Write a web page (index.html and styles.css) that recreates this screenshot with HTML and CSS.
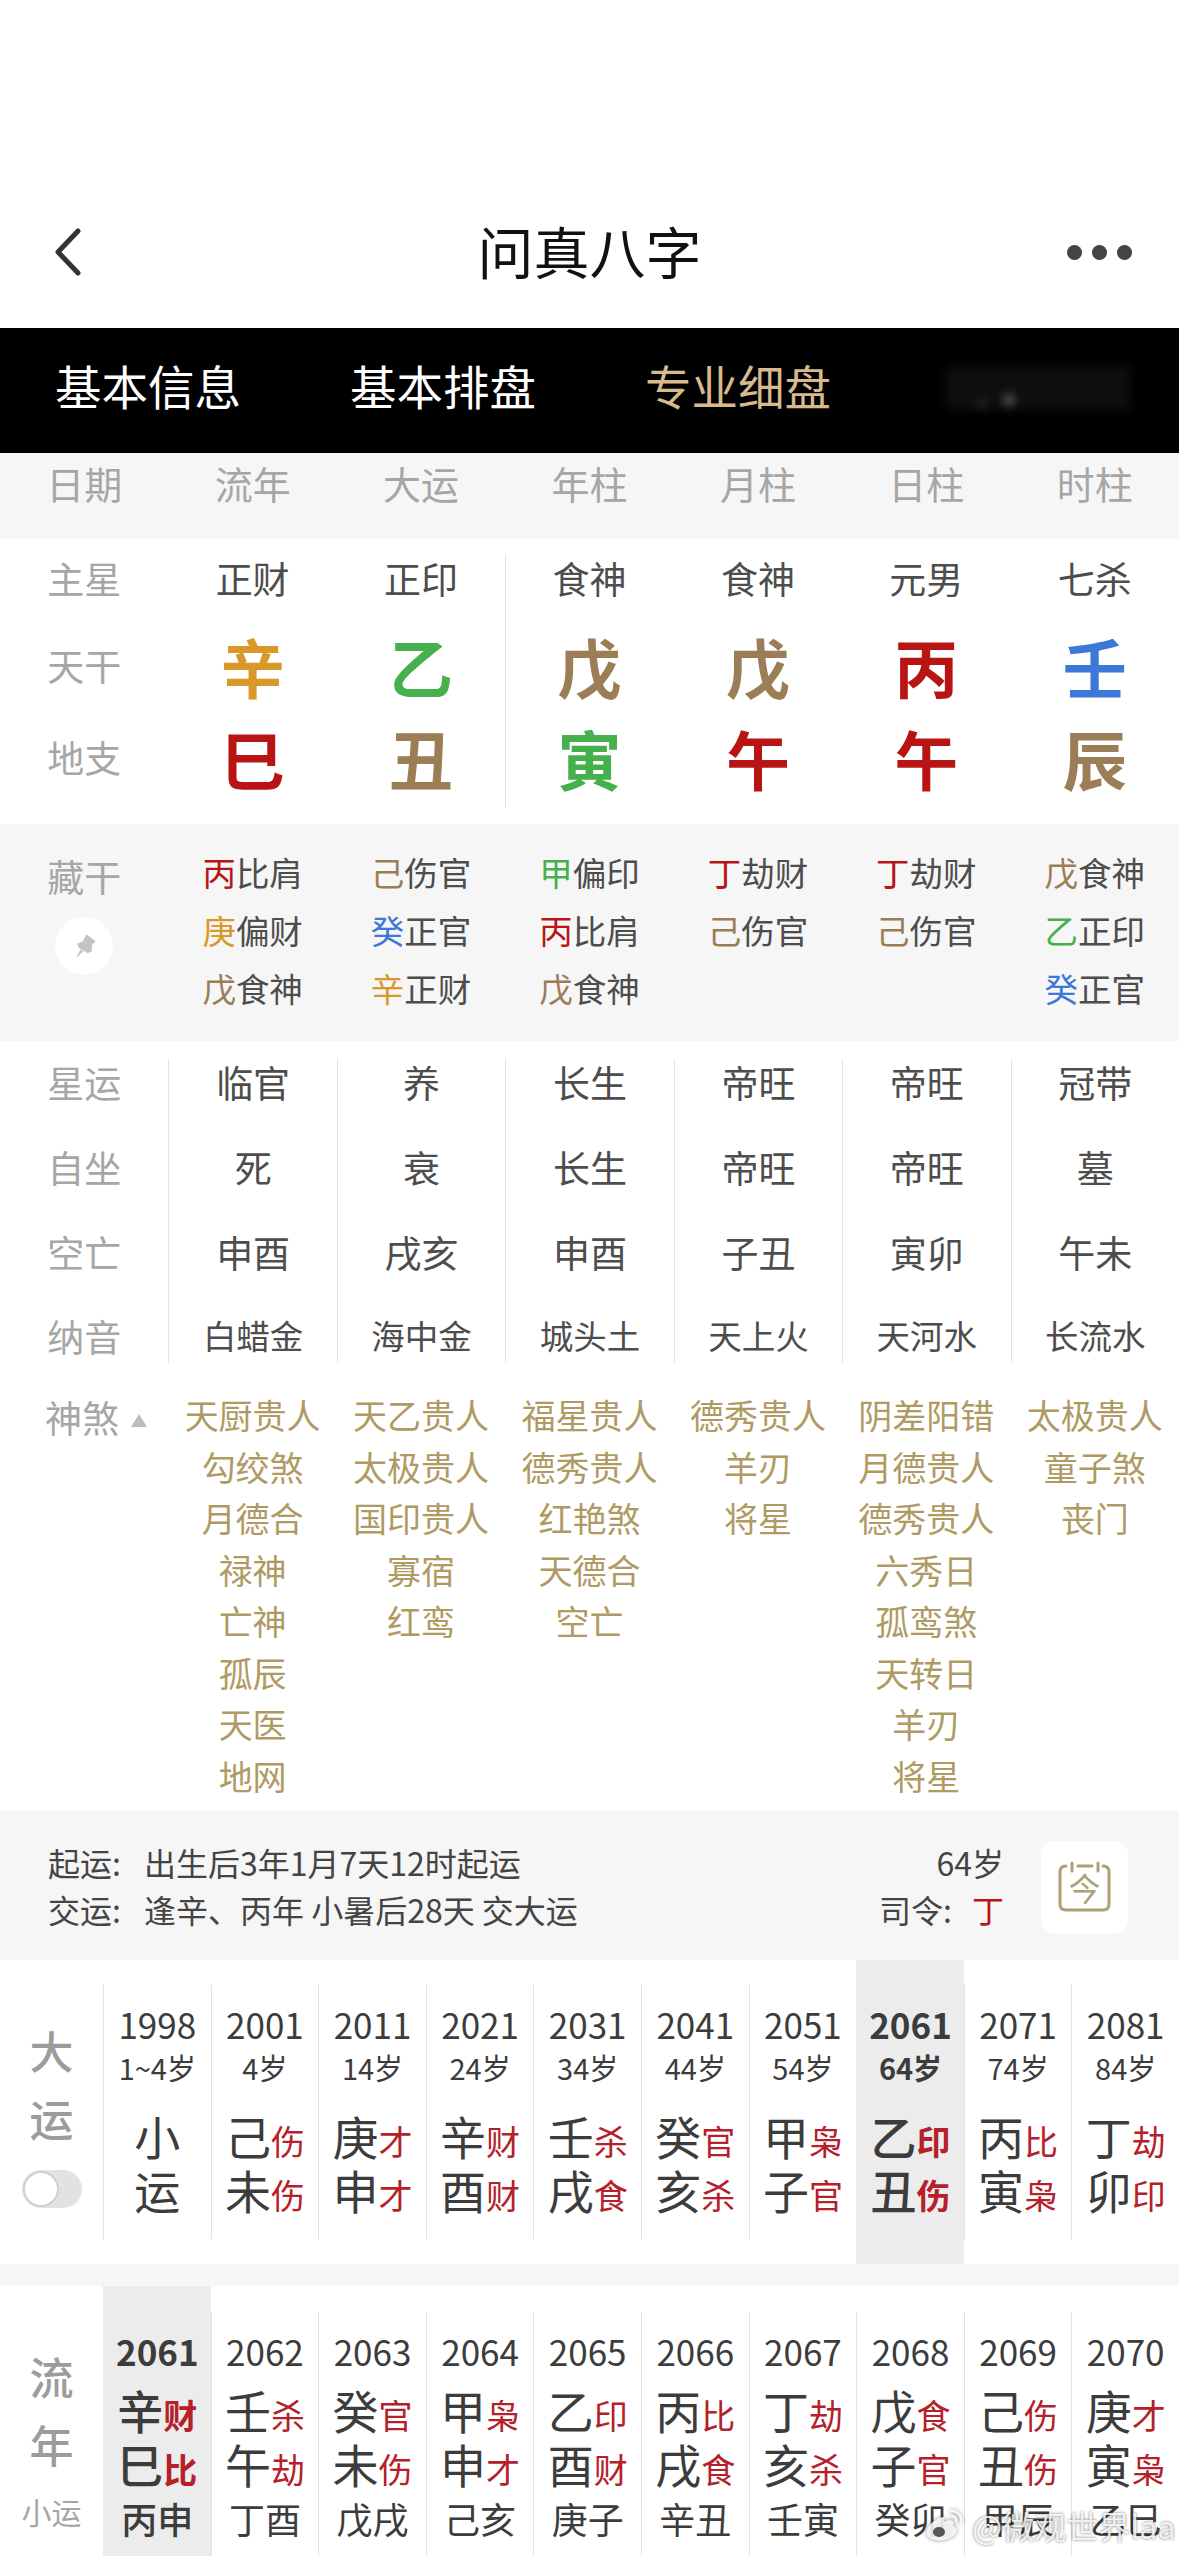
FILE: index.html
```html
<!DOCTYPE html>
<html lang="zh-CN">

<head>
    <meta charset="UTF-8">
    <meta name="viewport" content="width=device-width, initial-scale=1.0">
    <title>问真八字</title>
    <link rel="stylesheet" href="styles.css">
</head>

<body>
    <header class="topbar">
        <div class="topbar-side">
            <svg class="icon-back" viewBox="0 0 30 50"><path d="M25 4 L5 25 L25 46"/></svg>
        </div>
        <div class="topbar-title">问真八字</div>
        <div class="topbar-side topbar-more"><i></i><i></i><i></i></div>
    </header>

    <nav class="tabs">
        <div class="tab">基本信息</div>
        <div class="tab">基本排盘</div>
        <div class="tab tab-active">专业细盘</div>
        <div class="tab-blur"></div>
    </nav>

    <div class="grid7 headrow">
        <div>日期</div><div>流年</div><div>大运</div><div>年柱</div><div>月柱</div><div>日柱</div><div>时柱</div>
    </div>

    <!-- 主星 天干 地支 -->
    <section class="grid7 pillars">
        <div class="label">主星</div><div class="star">正财</div><div class="star">正印</div><div class="star">食神</div><div class="star">食神</div><div class="star">元男</div><div class="star">七杀</div>
        <div class="label">天干</div><div class="big gold">辛</div><div class="big green">乙</div><div class="big brown">戊</div><div class="big brown">戊</div><div class="big red">丙</div><div class="big blue">壬</div>
        <div class="label">地支</div><div class="big red">巳</div><div class="big brown">丑</div><div class="big green">寅</div><div class="big red">午</div><div class="big red">午</div><div class="big brown">辰</div>
    </section>

    <!-- 藏干 -->
    <section class="grid7 hidden-band">
        <div class="hidden-label">
            <div class="label">藏干</div>
            <div class="pin">
                <svg viewBox="0 0 24 24"><path d="M14 2 L22 8 L19 11 L18.5 17 L15 18 L8 14 L6 10 L11 8 Z M9 15 L11.5 16.5 L5 22.5 Z"/></svg>
            </div>
        </div>
        <div class="hidden-col">
            <p><b class="red">丙</b>比肩</p><p><b class="gold">庚</b>偏财</p><p><b class="brown">戊</b>食神</p>
        </div>
        <div class="hidden-col">
            <p><b class="brown">己</b>伤官</p><p><b class="blue">癸</b>正官</p><p><b class="gold">辛</b>正财</p>
        </div>
        <div class="hidden-col">
            <p><b class="green">甲</b>偏印</p><p><b class="red">丙</b>比肩</p><p><b class="brown">戊</b>食神</p>
        </div>
        <div class="hidden-col">
            <p><b class="red">丁</b>劫财</p><p><b class="brown">己</b>伤官</p>
        </div>
        <div class="hidden-col">
            <p><b class="red">丁</b>劫财</p><p><b class="brown">己</b>伤官</p>
        </div>
        <div class="hidden-col">
            <p><b class="brown">戊</b>食神</p><p><b class="green">乙</b>正印</p><p><b class="blue">癸</b>正官</p>
        </div>
    </section>

    <!-- 星运 自坐 空亡 纳音 -->
    <section class="grid7 fortune">
        <div class="fortune-col fortune-labels">
            <div>星运</div><div>自坐</div><div>空亡</div><div>纳音</div>
        </div>
        <div class="fortune-col"><div>临官</div><div>死</div><div>申酉</div><div class="nayin">白蜡金</div></div>
        <div class="fortune-col"><div>养</div><div>衰</div><div>戌亥</div><div class="nayin">海中金</div></div>
        <div class="fortune-col"><div>长生</div><div>长生</div><div>申酉</div><div class="nayin">城头土</div></div>
        <div class="fortune-col"><div>帝旺</div><div>帝旺</div><div>子丑</div><div class="nayin">天上火</div></div>
        <div class="fortune-col"><div>帝旺</div><div>帝旺</div><div>寅卯</div><div class="nayin">天河水</div></div>
        <div class="fortune-col"><div>冠带</div><div>墓</div><div>午未</div><div class="nayin">长流水</div></div>
    </section>

    <!-- 神煞 -->
    <section class="grid7 gods">
        <div class="gods-label">神煞<i class="caret"></i></div>
        <div class="gods-col"><div>天厨贵人</div><div>勾绞煞</div><div>月德合</div><div>禄神</div><div>亡神</div><div>孤辰</div><div>天医</div><div>地网</div></div>
        <div class="gods-col"><div>天乙贵人</div><div>太极贵人</div><div>国印贵人</div><div>寡宿</div><div>红鸾</div></div>
        <div class="gods-col"><div>福星贵人</div><div>德秀贵人</div><div>红艳煞</div><div>天德合</div><div>空亡</div></div>
        <div class="gods-col"><div>德秀贵人</div><div>羊刃</div><div>将星</div></div>
        <div class="gods-col"><div>阴差阳错</div><div>月德贵人</div><div>德秀贵人</div><div>六秀日</div><div>孤鸾煞</div><div>天转日</div><div>羊刃</div><div>将星</div></div>
        <div class="gods-col"><div>太极贵人</div><div>童子煞</div><div>丧门</div></div>
    </section>

    <!-- 起运 交运 -->
    <section class="info">
        <div class="info-left">
            <div class="info-line"><span class="info-key">起运:</span>出生后3年1月7天12时起运</div>
            <div class="info-line"><span class="info-key">交运:</span>逢辛、丙年 小暑后28天 交大运</div>
        </div>
        <div class="info-right">
            <div class="info-line">64岁</div>
            <div class="info-line">司令:<span class="info-ding red">丁</span></div>
        </div>
        <div class="today">
            <svg viewBox="0 0 53 49">
                <path d="M8 3 Q2 3 2 9 L2 41 Q2 47 8 47 L45 47 Q51 47 51 41 L51 9 Q51 3 45 3"/>
                <path d="M14 0 L14 8 M40 0 L40 8 M20 3 L34 3"/>
                <text x="26.5" y="38">今</text>
            </svg>
        </div>
    </section>

    <!-- 大运 -->
    <section class="luck luck-big">
        <div class="luck-side">
            <div class="side-char">大</div>
            <div class="side-char">运</div>
            <div class="toggle"><i></i></div>
        </div>
        <div class="luck-col"><div class="luck-inner">
            <div class="year">1998</div><div class="age">1~4岁</div>
            <div class="gz gz-first">小</div><div class="gz">运</div>
        </div></div>
        <div class="luck-col"><div class="luck-inner">
            <div class="year">2001</div><div class="age">4岁</div>
            <div class="gz gz-first">己<small>伤</small></div><div class="gz">未<small>伤</small></div>
        </div></div>
        <div class="luck-col"><div class="luck-inner">
            <div class="year">2011</div><div class="age">14岁</div>
            <div class="gz gz-first">庚<small>才</small></div><div class="gz">申<small>才</small></div>
        </div></div>
        <div class="luck-col"><div class="luck-inner">
            <div class="year">2021</div><div class="age">24岁</div>
            <div class="gz gz-first">辛<small>财</small></div><div class="gz">酉<small>财</small></div>
        </div></div>
        <div class="luck-col"><div class="luck-inner">
            <div class="year">2031</div><div class="age">34岁</div>
            <div class="gz gz-first">壬<small>杀</small></div><div class="gz">戌<small>食</small></div>
        </div></div>
        <div class="luck-col"><div class="luck-inner">
            <div class="year">2041</div><div class="age">44岁</div>
            <div class="gz gz-first">癸<small>官</small></div><div class="gz">亥<small>杀</small></div>
        </div></div>
        <div class="luck-col"><div class="luck-inner">
            <div class="year">2051</div><div class="age">54岁</div>
            <div class="gz gz-first">甲<small>枭</small></div><div class="gz">子<small>官</small></div>
        </div></div>
        <div class="luck-col luck-now"><div class="luck-inner">
            <div class="year">2061</div><div class="age">64岁</div>
            <div class="gz gz-first">乙<small>印</small></div><div class="gz">丑<small>伤</small></div>
        </div></div>
        <div class="luck-col"><div class="luck-inner">
            <div class="year">2071</div><div class="age">74岁</div>
            <div class="gz gz-first">丙<small>比</small></div><div class="gz">寅<small>枭</small></div>
        </div></div>
        <div class="luck-col"><div class="luck-inner">
            <div class="year">2081</div><div class="age">84岁</div>
            <div class="gz gz-first">丁<small>劫</small></div><div class="gz">卯<small>印</small></div>
        </div></div>
    </section>

    <div class="band-gap"></div>

    <!-- 流年 -->
    <section class="luck luck-year">
        <div class="luck-side">
            <div class="side-char">流</div>
            <div class="side-char">年</div>
            <div class="side-small">小运</div>
        </div>
        <div class="luck-col luck-now"><div class="luck-inner">
            <div class="year">2061</div>
            <div class="gz gz-first">辛<small>财</small></div><div class="gz">巳<small>比</small></div><div class="gz-minor">丙申</div>
        </div></div>
        <div class="luck-col"><div class="luck-inner">
            <div class="year">2062</div>
            <div class="gz gz-first">壬<small>杀</small></div><div class="gz">午<small>劫</small></div><div class="gz-minor">丁酉</div>
        </div></div>
        <div class="luck-col"><div class="luck-inner">
            <div class="year">2063</div>
            <div class="gz gz-first">癸<small>官</small></div><div class="gz">未<small>伤</small></div><div class="gz-minor">戊戌</div>
        </div></div>
        <div class="luck-col"><div class="luck-inner">
            <div class="year">2064</div>
            <div class="gz gz-first">甲<small>枭</small></div><div class="gz">申<small>才</small></div><div class="gz-minor">己亥</div>
        </div></div>
        <div class="luck-col"><div class="luck-inner">
            <div class="year">2065</div>
            <div class="gz gz-first">乙<small>印</small></div><div class="gz">酉<small>财</small></div><div class="gz-minor">庚子</div>
        </div></div>
        <div class="luck-col"><div class="luck-inner">
            <div class="year">2066</div>
            <div class="gz gz-first">丙<small>比</small></div><div class="gz">戌<small>食</small></div><div class="gz-minor">辛丑</div>
        </div></div>
        <div class="luck-col"><div class="luck-inner">
            <div class="year">2067</div>
            <div class="gz gz-first">丁<small>劫</small></div><div class="gz">亥<small>杀</small></div><div class="gz-minor">壬寅</div>
        </div></div>
        <div class="luck-col"><div class="luck-inner">
            <div class="year">2068</div>
            <div class="gz gz-first">戊<small>食</small></div><div class="gz">子<small>官</small></div><div class="gz-minor">癸卯</div>
        </div></div>
        <div class="luck-col"><div class="luck-inner">
            <div class="year">2069</div>
            <div class="gz gz-first">己<small>伤</small></div><div class="gz">丑<small>伤</small></div><div class="gz-minor">甲辰</div>
        </div></div>
        <div class="luck-col"><div class="luck-inner">
            <div class="year">2070</div>
            <div class="gz gz-first">庚<small>才</small></div><div class="gz">寅<small>枭</small></div><div class="gz-minor">乙巳</div>
        </div></div>
    </section>

    <div class="watermark">
        <svg viewBox="0 0 40 34">
            <path d="M16 10 C6 14 1 22 3 27 C6 33 18 34 26 30 C34 26 35 20 29 18 C31 12 26 11 20 14 C21 9 20 8 16 10 Z"/>
            <path class="wm-arc" d="M26 3 C34 2 39 9 37 16 M27 8 C31 8 33 11 32 14"/>
            <ellipse class="wm-eye" cx="15" cy="24" rx="6" ry="5"/>
        </svg>
        <span>@微观世界laa</span>
    </div>
</body>

</html>
```

FILE: styles.css
```css
* {
    box-sizing: border-box;
}

body {
    margin: 0;
    width: 1179px;
    height: 2556px;
    overflow: hidden;
    position: relative;
    background-color: #fff;
    color: #4d4d4d;
    font-family: "Noto Sans CJK SC", "Noto Sans", sans-serif;
}

p {
    margin: 0;
}

.gold { color: #d9982a; }
.green { color: #46b04c; }
.brown { color: #9b7d56; }
.red { color: #b81414; }
.blue { color: #3c78d8; }

.grid7 {
    display: grid;
    grid-template-columns: repeat(7, 1fr);
    text-align: center;
}

/* barra superior */
.topbar {
    height: 328px;
    padding: 170px 47px 0;
    display: flex;
    align-items: center;
}

.topbar-side {
    width: 90px;
    display: flex;
    align-items: center;
    margin-top: 6px;
}

.topbar-title {
    flex: 1;
    text-align: center;
    font-size: 56px;
    color: #111;
}

.icon-back {
    width: 30px;
    height: 50px;
    margin-left: 6px;
    fill: none;
    stroke: #333;
    stroke-width: 5;
    stroke-linecap: round;
    stroke-linejoin: round;
}

.topbar-more {
    justify-content: flex-end;
    gap: 10px;
}

.topbar-more i {
    width: 15px;
    height: 15px;
    border-radius: 50%;
    background-color: #444;
}

/* pestanas */
.tabs {
    height: 125px;
    padding: 0 0 12px 55px;
    background-color: #000;
    display: flex;
    align-items: center;
}

.tab {
    width: 295px;
    font-size: 46.5px;
    color: #fff;
}

.tab-active {
    color: #d6b98c;
}

.tab-blur {
    width: 185px;
    height: 44px;
    margin-top: 6px;
    margin-left: 6px;
    filter: blur(5px);
    background:
        radial-gradient(circle at 36px 38px, #777 0, rgba(120, 120, 120, 0) 4px),
        radial-gradient(circle at 63px 34px, #aaa 0, rgba(120, 120, 120, 0) 7px),
        #0e0e0e;
}

.headrow {
    height: 86px;
    background-color: #f6f6f6;
    font-size: 38px;
    line-height: 60px;
    color: #a6a6a6;
}

.label {
    font-size: 37px;
    color: #a6a6a6;
}

/* pilares */
.pillars {
    height: 253px;
    margin: 16px 0;
    padding-bottom: 17px;
    grid-template-rows: 47px 122px 58px;
    row-gap: 2px;
    align-items: center;
    line-height: 1;
    background: linear-gradient(#e3e3e3, #e3e3e3) no-repeat 505px 0 / 1px 100%;
}

.star {
    font-size: 37px;
}

.big {
    font-size: 64px;
    font-weight: 700;
}

/* 藏干 */
.hidden-band {
    height: 217px;
    padding-top: 19px;
    background-color: #f6f6f6;
}

.hidden-label {
    display: flex;
    flex-direction: column;
    align-items: center;
}

.hidden-label .label {
    line-height: 66px;
}

.pin {
    width: 58px;
    height: 58px;
    margin-top: 8px;
    border-radius: 50%;
    background-color: #fff;
    display: flex;
    align-items: center;
    justify-content: center;
}

.pin svg {
    width: 28px;
    height: 28px;
    fill: #c4c4c4;
}

.hidden-col p {
    font-size: 33.5px;
    line-height: 58px;
}

.hidden-col b {
    font-weight: 400;
}

/* 星运 */
.fortune {
    height: 322px;
    padding-top: 18px;
    font-size: 37px;
}

.fortune-col {
    height: 304px;
    display: flex;
    flex-direction: column;
    gap: 35px;
    border-left: 1px solid #e3e3e3;
    line-height: 47px;
}

.fortune-col div {
    height: 50px;
}

.fortune-labels {
    border-left: none;
    color: #a6a6a6;
}

.fortune-col .nayin {
    font-size: 33.5px;
    line-height: 44px;
}

/* 神煞 */
.gods {
    height: 447px;
    padding-top: 26px;
    font-size: 34px;
    color: #b09a63;
    line-height: 51.5px;
    white-space: nowrap;
}

.gods-label {
    padding: 6px 0 0 45px;
    display: flex;
    align-items: center;
    gap: 12px;
    height: 51.5px;
    font-size: 37px;
    color: #a6a6a6;
}

.caret {
    width: 0;
    height: 0;
    margin-top: 6px;
    border-left: 8px solid transparent;
    border-right: 8px solid transparent;
    border-bottom: 13px solid #bdbdbd;
}

/* info */
.info {
    height: 150px;
    padding: 1px 51px 0 48px;
    background-color: #f6f6f6;
    display: flex;
    align-items: center;
    font-size: 32px;
    color: #444;
}

.info-left {
    flex: 1;
}

.info-right {
    text-align: right;
}

.info-line {
    line-height: 47px;
}

.info-key {
    display: inline-block;
    width: 96px;
}

.info-ding {
    margin-left: 20px;
}

.today {
    width: 87px;
    height: 93px;
    margin: 3px 0 0 37px;
    border-radius: 14px;
    background-color: #fff;
    display: flex;
    align-items: center;
    justify-content: center;
}

.today svg {
    width: 53px;
    height: 49px;
    overflow: visible;
    fill: none;
    stroke: #ad9f76;
    stroke-width: 3;
    stroke-linecap: round;
}

.today text {
    fill: #ad9f76;
    stroke: none;
    font-size: 32px;
    text-anchor: middle;
}

/* tablas de suerte */
.luck {
    display: grid;
    grid-template-columns: 103px repeat(10, 1fr);
    text-align: center;
    color: #3c3c3c;
    white-space: nowrap;
}

.luck-big {
    height: 304px;
}

.luck-year {
    height: 270px;
}

.luck-side {
    padding-top: 60px;
    display: flex;
    flex-direction: column;
    align-items: center;
}

.side-char {
    height: 60px;
    margin-bottom: 8px;
    font-size: 44px;
    font-weight: 500;
    line-height: 60px;
    color: #9c9c9c;
}

.side-small {
    margin-top: 9px;
    font-size: 30px;
    line-height: 40px;
    color: #a6a6a6;
}

.toggle {
    width: 60px;
    height: 38px;
    margin-top: 14px;
    border-radius: 19px;
    background-color: #e2e2e2;
}

.toggle i {
    display: block;
    width: 36px;
    height: 36px;
    margin: 1px;
    border-radius: 50%;
    background-color: #fff;
    border: 2px solid #d0d0d0;
}

.luck-col {
    padding-top: 25px;
}

.luck-year .luck-col {
    padding-top: 26px;
}

.luck-inner {
    height: 254px;
    padding-top: 20px;
    border-left: 1px solid #e3e3e3;
}

.luck-year .luck-inner {
    height: 244px;
}

.year {
    font-size: 35px;
    line-height: 37px;
    margin-bottom: 3px;
}

.age {
    font-size: 29px;
    line-height: 44px;
    margin-bottom: 2px;
}

.gz {
    height: 54px;
    font-size: 46px;
    line-height: 50px;
}

.gz small {
    font-size: 34px;
    color: #b5202a;
}

.gz-first {
    margin-top: 21px;
}

.luck-year .gz-first {
    margin-top: 15px;
}

.gz-minor {
    font-size: 36px;
    line-height: 52px;
}

.luck-now {
    background-color: #ececec;
}

.luck-now .luck-inner {
    border-left-color: transparent;
}

.luck-now .year,
.luck-now .age,
.luck-now .gz small {
    font-weight: 700;
}

.luck-now .gz,
.luck-now .gz-minor {
    font-weight: 500;
}

.band-gap {
    height: 22px;
    background-color: #f6f6f6;
}

/* marca de agua */
.watermark {
    position: absolute;
    left: 924px;
    top: 2507px;
    display: flex;
    align-items: center;
    gap: 8px;
    font-size: 32px;
    line-height: 36px;
    color: rgba(255, 255, 255, 0.85);
    text-shadow: 0 0 3px rgba(0, 0, 0, 0.55);
}

.watermark svg {
    width: 40px;
    height: 34px;
    fill: rgba(255, 255, 255, 0.85);
    filter: drop-shadow(0 0 2px rgba(0, 0, 0, 0.5));
}

.wm-arc {
    fill: none;
    stroke: rgba(255, 255, 255, 0.85);
    stroke-width: 2.5;
}

.wm-eye {
    fill: #555;
}
```
